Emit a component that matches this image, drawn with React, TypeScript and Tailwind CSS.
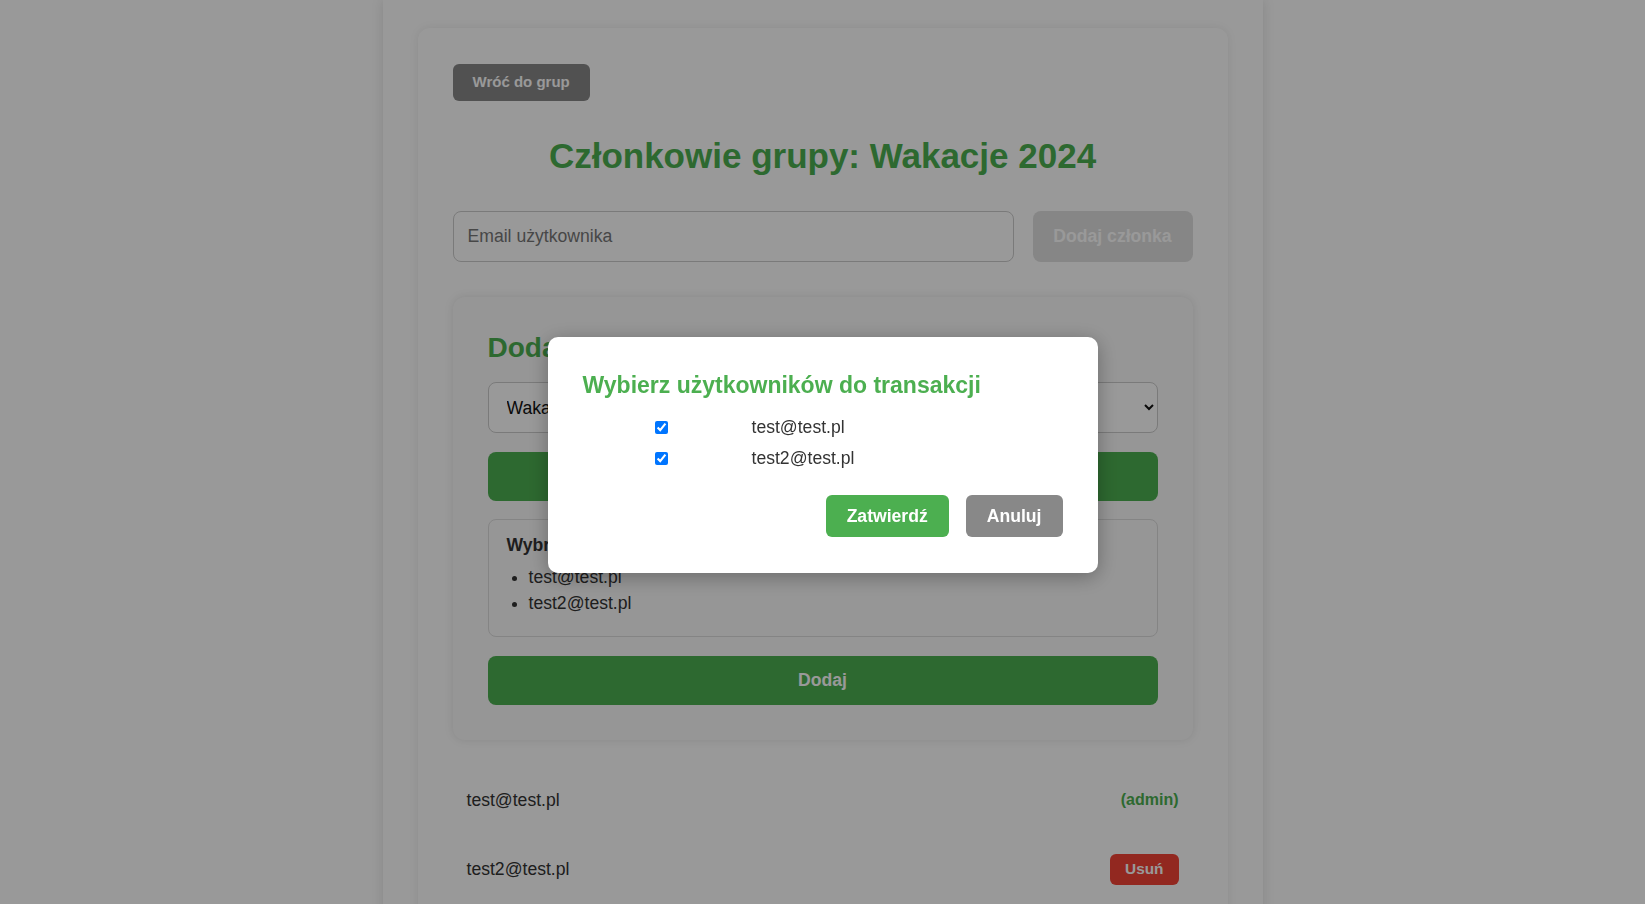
import { useState } from 'react';

const members = [
  { email: 'test@test.pl', admin: true },
  { email: 'test2@test.pl', admin: false },
];

export default function App() {
  const [selected, setSelected] = useState<string[]>(['test@test.pl', 'test2@test.pl']);

  const toggle = (email: string) =>
    setSelected((prev) => (prev.includes(email) ? prev.filter((e) => e !== email) : [...prev, email]));

  return (
    <div className="min-h-screen bg-white text-[#333] text-[17.6px] font-['Liberation_Sans',Arial,sans-serif]">
      <div className="mx-auto w-[880px] min-h-screen bg-white pt-[28px] pb-10 shadow-[0_0_12px_rgba(0,0,0,0.12)]">
        <div className="mx-[35px] rounded-[12px] bg-white p-[35px] pt-[36px] shadow-[0_0_10px_rgba(0,0,0,0.08)]">
          <button className="h-[37px] rounded-[6px] bg-[#888] px-[20px] text-[15px] font-bold text-white">
            Wróć do grup
          </button>

          <h1 className="mt-[35px] text-center text-[35px] font-bold leading-[40px] text-[#4caf50]">
            Członkowie grupy: Wakacje 2024
          </h1>

          <div className="mt-[35px] flex gap-[19px]">
            <input
              type="text"
              placeholder="Email użytkownika"
              className="h-[51px] flex-1 rounded-[8px] border border-[#ccc] px-[14px] placeholder:text-[#777]"
            />
            <button disabled className="h-[51px] w-[160px] rounded-[8px] bg-[#e0e0e0] font-bold text-white">
              Dodaj członka
            </button>
          </div>

          <div className="mt-[35px] rounded-[12px] bg-[#fafafa] p-[35px] shadow-[0_0_10px_rgba(0,0,0,0.1)]">
            <h2 className="text-[28px] font-bold leading-[32px] text-[#4caf50]">Dodaj transakcję</h2>

            <select className="mt-[18px] h-[51px] w-full rounded-[8px] border border-[#ccc] bg-white px-[14px] text-[#111]">
              <option>Wakacje 2024</option>
            </select>

            <button className="mt-[19px] h-[49px] w-full rounded-[8px] bg-[#4caf50] font-bold text-white">
              Wybierz użytkowników
            </button>

            <div className="mt-[18px] rounded-[8px] border border-[#ddd] px-[18px] pt-[15px] pb-[20px]">
              <p className="font-bold leading-[20px]">Wybrani użytkownicy:</p>
              <ul className="mt-[9px] list-disc pl-[22px]">
                {selected.map((email) => (
                  <li key={email} className="leading-[26px]">
                    {email}
                  </li>
                ))}
              </ul>
            </div>

            <button className="mt-[19px] h-[49px] w-full rounded-[8px] bg-[#4caf50] font-bold text-white">
              Dodaj
            </button>
          </div>

          <ul className="mt-[30px] flex flex-col gap-[9px]">
            {members.map((m) => (
              <li key={m.email} className="flex h-[60px] items-center justify-between px-[14px]">
                <span>{m.email}</span>
                {m.admin ? (
                  <span className="text-[16px] font-bold text-[#4caf50]">(admin)</span>
                ) : (
                  <button className="h-[31px] rounded-[6px] bg-[#f44336] px-[15px] text-[15.4px] font-bold text-white">
                    Usuń
                  </button>
                )}
              </li>
            ))}
          </ul>
        </div>
      </div>

      <div className="fixed inset-0 flex items-center justify-center bg-black/40 pt-[6px]">
        <div className="w-[550px] rounded-[10px] bg-white px-[35px] pt-[35px] pb-[36px] shadow-[0_4px_20px_rgba(0,0,0,0.3)]">
          <h3 className="text-[23px] font-bold leading-[27px] text-[#4caf50]">
            Wybierz użytkowników do transakcji
          </h3>
          <div className="mt-[13px]">
            {members.map((m) => (
              <label key={m.email} className="flex h-[31px] items-center">
                <input
                  type="checkbox"
                  checked={selected.includes(m.email)}
                  onChange={() => toggle(m.email)}
                  className="ml-[72px] h-[13px] w-[13px] accent-[#0075ff]"
                />
                <span className="ml-[84px]">{m.email}</span>
              </label>
            ))}
          </div>
          <div className="mt-[21px] flex justify-end gap-[17px]">
            <button className="h-[42px] rounded-[6px] bg-[#4caf50] px-[21px] font-bold text-white">Zatwierdź</button>
            <button className="h-[42px] rounded-[6px] bg-[#888] px-[21px] font-bold text-white">Anuluj</button>
          </div>
        </div>
      </div>
    </div>
  );
}
